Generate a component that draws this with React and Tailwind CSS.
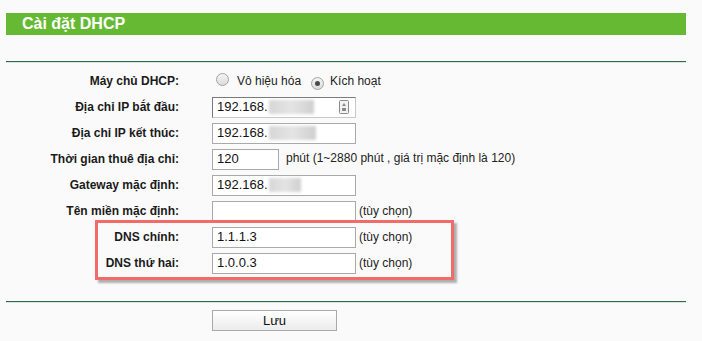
import React from 'react';

const FONT = "font-['Liberation_Sans',Arial,sans-serif]";

function Radio({ checked }) {
  return (
    <span className="inline-flex w-[13px] h-[13px] rounded-full border border-[#a3a3a3] bg-gradient-to-b from-[#f4f4f4] to-[#dcdcdc] items-center justify-center shrink-0">
      {checked && <span className="w-[5px] h-[5px] rounded-full bg-[#4a4a4a]" />}
    </span>
  );
}

function Blur({ w }) {
  return (
    <span className="inline-flex items-center h-[14px] ml-[1px]" style={{ width: w }}>
      <span className="h-[14px] w-full bg-gradient-to-r from-[#d6d6d6] via-[#e4e4e4] to-[#cfcfcf] blur-[1.5px]" />
    </span>
  );
}

function Field({ w = 144, children, first }) {
  return (
    <div
      className={`h-[21px] bg-white border flex items-center pl-[4px] pr-[6px] text-[13px] text-[#111] ${first ? 'border-t-[#7a7a7a] border-l-[#7a7a7a] border-r-[#c8c8c8] border-b-[#c8c8c8]' : 'border-[#a9a9a9]'}`}
      style={{ width: w }}
    >
      {children}
    </div>
  );
}

function AutofillIcon() {
  return (
    <svg width="10" height="14" viewBox="0 0 10 14" className="ml-auto">
      <rect x="0.5" y="0.5" width="9" height="13" rx="1" fill="#f2f2f2" stroke="#8a8a8a" />
      <path d="M5 3 L7 6 L3 6 Z" fill="#8a8a8a" />
      <rect x="3" y="8" width="4" height="3" fill="#8a8a8a" />
    </svg>
  );
}

function Row({ label, children }) {
  return (
    <div className="h-[26px] flex items-center">
      <div className="w-[173px] text-right text-[12px] font-bold text-[#1a1a1a]">{label}</div>
      <div className="ml-[33px] flex items-center">{children}</div>
    </div>
  );
}

const Opt = () => <span className="ml-[3px] text-[12px] text-[#222]">(tùy chọn)</span>;

export default function App() {
  return (
    <div className={`w-[702px] h-[341px] bg-[#fafafa] relative overflow-hidden ${FONT}`}>
      <div className="pt-[13px] pl-[6px] w-[686px]">
        <div className="h-[22px] bg-[#66b933] pl-[16px] text-white font-bold text-[16px] leading-[22px]">
          Cài đặt DHCP
        </div>
        <div className="mt-[26px] h-px bg-[#2d6a4a]" />
        <div className="h-px bg-[#d6e8dd]" />

        <div className="mt-[5px]">
          <Row label="Máy chủ DHCP:">
            <span className="ml-[4px]"><Radio /></span>
            <span className="ml-[8px] text-[12px] text-[#222]">Vô hiệu hóa</span>
            <span className="ml-[10px]"><Radio checked /></span>
            <span className="ml-[6px] text-[12px] text-[#222]">Kích hoạt</span>
          </Row>
          <Row label="Địa chỉ IP bắt đầu:">
            <Field first>192.168.<Blur w={45} /><AutofillIcon /></Field>
          </Row>
          <Row label="Địa chỉ IP kết thúc:">
            <Field>192.168.<Blur w={47} /></Field>
          </Row>
          <Row label="Thời gian thuê địa chỉ:">
            <Field w={67}>120</Field>
            <span className="ml-[7px] text-[12px] text-[#222] -mt-[3px]">phút (1~2880 phút , giá trị mặc định là 120)</span>
          </Row>
          <Row label="Gateway mặc định:">
            <Field>192.168.<Blur w={32} /></Field>
          </Row>
          <Row label="Tên miền mặc định:">
            <Field />
            <Opt />
          </Row>
          <Row label="DNS chính:">
            <Field>1.1.1.3</Field>
            <Opt />
          </Row>
          <Row label="DNS thứ hai:">
            <Field>1.0.0.3</Field>
            <Opt />
          </Row>
        </div>

        <div className="mt-[25px] h-px bg-[#2d6a4a]" />
        <div className="h-px bg-[#d6e8dd]" />
        <div className="mt-[7px] ml-[206px]">
          <button className="w-[125px] h-[21px] border border-[#a9a9a9] bg-gradient-to-b from-white to-[#ececec] text-[13px] text-[#111] flex items-center justify-center">
            Lưu
          </button>
        </div>
      </div>

      <div className="absolute left-[95px] top-[220px] w-[359px] h-[60px] border-[3px] border-[#f26b6b] shadow-[3px_3px_2px_rgba(0,0,0,0.3)] pointer-events-none" />
    </div>
  );
}
